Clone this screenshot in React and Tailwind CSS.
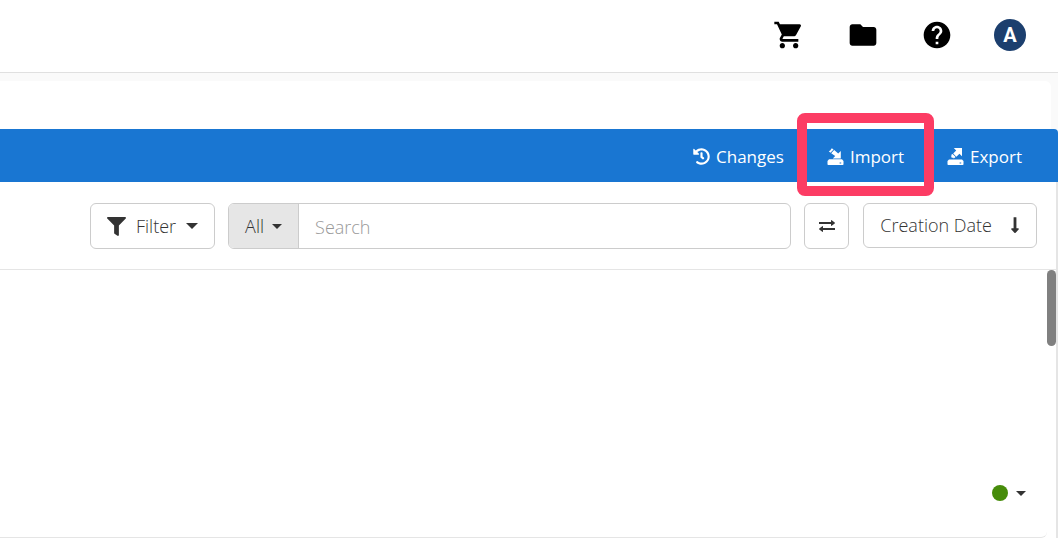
// App: item list page with top bar, action bar and search toolbar
import React from 'react';
import { useState } from 'react';
import { MdShoppingCart, MdFolder, MdHelp } from 'react-icons/md';
import { FaHistory, FaFilter, FaLongArrowAltDown } from 'react-icons/fa';

// Small triangle shown on drop-down buttons
function Caret({ className }) {
  return (
    <svg viewBox="0 0 10 5" className={className} fill="currentColor" aria-hidden="true">
      <path d="M0 0h10L5 5z" />
    </svg>
  );
}

function ImportIcon() {
  return (
    <svg viewBox="0 0 17 17" className="size-[17px]" fill="currentColor" aria-hidden="true">
      <path d="M4.8 0.2 6.6 1.6 3.4 4.8 1.8 3.2 3.2 2.6z" />
      <path d="M7.2 2 11.2 5.4 13.8 3V10.4H5.8L8.2 8 4.2 5.2z" />
      <path
        fillRule="evenodd"
        d="M2 11.2h13L16.5 13v3.2a.8.8 0 0 1-.8.8H1.3a.8.8 0 0 1-.8-.8V13zM12.6 14.6v1h1.6v-1z"
      />
    </svg>
  );
}

function ExportIcon() {
  return (
    <svg viewBox="0 0 17 17" className="size-[17px]" fill="currentColor" aria-hidden="true">
      <path d="M6.8 0H15v8.2l-2.6-2.4-3 3L6.2 5.6 9.2 2.6z" />
      <path d="M5.6 6 8.6 9 6.8 10.4 6 9.4 5 10 4 8.6 4.8 8 4 7z" />
      <path
        fillRule="evenodd"
        d="M2 11.4h13L16.5 13v3.2a.8.8 0 0 1-.8.8H1.3a.8.8 0 0 1-.8-.8V13zM12.6 14.6v1h1.6v-1z"
      />
    </svg>
  );
}

function SwapIcon() {
  return (
    <svg viewBox="0 0 16 12" className="h-3 w-4" fill="currentColor" aria-hidden="true">
      <path d="M0 2h12V0.5q0-.7.7-.3l3 2.4q.5.4 0 .8l-3 2.4q-.7.4-.7-.3V4H0z" />
      <path d="M16 8H4V6.5q0-.7-.7-.3l-3 2.4q-.5.4 0 .8l3 2.4q.7.4.7-.3V10h12z" />
    </svg>
  );
}

function TopBar() {
  return (
    <header className="flex h-[73px] items-center justify-end gap-[41px] border-b border-[#e0e0e0] bg-white pr-8 pb-0.5 text-black">
      <div className="flex items-center gap-[42px]">
        <button type="button" aria-label="Cart">
          <MdShoppingCart className="size-8" />
        </button>
        <button type="button" aria-label="Files">
          <MdFolder className="size-8" />
        </button>
        <button type="button" aria-label="Help">
          <MdHelp className="size-8" />
        </button>
      </div>
      <button
        type="button"
        aria-label="Account"
        className="size-8 rounded-full bg-[#1c3f6e] font-['Roboto',sans-serif] text-xl leading-8 font-bold text-white"
      >
        A
      </button>
    </header>
  );
}

function ActionBar() {
  return (
    <nav className="flex h-[53px] items-center justify-end gap-[43px] rounded-tr bg-[#1976d2] pt-0.5 pr-9 text-[17px] leading-7 text-white">
      <button type="button" className="flex items-center gap-1.5">
        <FaHistory className="size-[17px]" />
        Changes
      </button>
      <button type="button" className="relative flex items-center gap-1.5">
        {/* Highlight frame around the import action */}
        <span className="absolute -inset-x-[30px] -top-[30px] h-[83px] rounded-lg border-[10px] border-[#fc3c64]" />
        <ImportIcon />
        Import
      </button>
      <button type="button" className="flex items-center gap-1.5">
        <ExportIcon />
        Export
      </button>
    </nav>
  );
}

function Toolbar() {
  const [query, setQuery] = useState('');

  return (
    <div className="flex items-start gap-[13px] border-b border-[#e5e5e5] pt-[21px] pr-[19px] pb-5 pl-[90px] text-lg font-light text-[#333]">
      <button
        type="button"
        className="flex h-[46px] items-center gap-2.5 rounded-md border border-[#ccc] px-4"
      >
        <FaFilter className="size-[19px]" />
        Filter
        <Caret className="h-1.5 w-3" />
      </button>

      {/* Search scope and text box */}
      <div className="flex h-[46px] flex-1 overflow-hidden rounded-md border border-[#ccc]">
        <button
          type="button"
          className="flex items-center gap-2 border-r border-[#ccc] bg-[#e6e6e6] px-4"
        >
          All
          <Caret className="h-[5px] w-2.5" />
        </button>
        <input
          type="text"
          aria-label="Search"
          placeholder="Search"
          value={query}
          onChange={(e) => setQuery(e.target.value)}
          className="min-w-0 flex-1 px-4 pt-0.5 outline-none placeholder:text-[#999]"
        />
      </div>

      <div className="flex items-start gap-3.5">
        <button
          type="button"
          aria-label="Swap"
          className="flex h-[46px] w-[45px] items-center justify-center rounded-md border border-[#ccc]"
        >
          <SwapIcon />
        </button>
        <button
          type="button"
          className="flex h-[45px] items-center gap-3.5 rounded-md border border-[#ccc] pr-3 pb-0.5 pl-4"
        >
          Creation Date
          <FaLongArrowAltDown className="size-[18px]" />
        </button>
      </div>
    </div>
  );
}

function App() {
  return (
    <div className="flex min-h-screen flex-col bg-[#fafafa] font-['Open_Sans',sans-serif]">
      <TopBar />
      <main className="flex flex-1 flex-col pt-2">
        <div className="mr-[7px] h-12 rounded-tr-md bg-white" />
        <ActionBar />
        <section className="flex flex-1 flex-col border-r-2 border-[#e5e5e5] bg-white">
          <Toolbar />
          <div className="flex flex-1 justify-end">
            <div className="flex flex-1 items-end justify-end rounded-br-md border-b border-[#e5e5e5] pr-[21px] pb-9">
              <button type="button" aria-label="Status" className="flex items-center gap-2 text-[#333]">
                <span className="size-4 rounded-full bg-[#468c0a]" />
                <Caret className="h-[5px] w-2.5" />
              </button>
            </div>
            {/* Scroll thumb */}
            <div className="h-[76px] w-[9px] rounded-full bg-[#808080]" />
          </div>
        </section>
      </main>
    </div>
  );
}

export default App;
